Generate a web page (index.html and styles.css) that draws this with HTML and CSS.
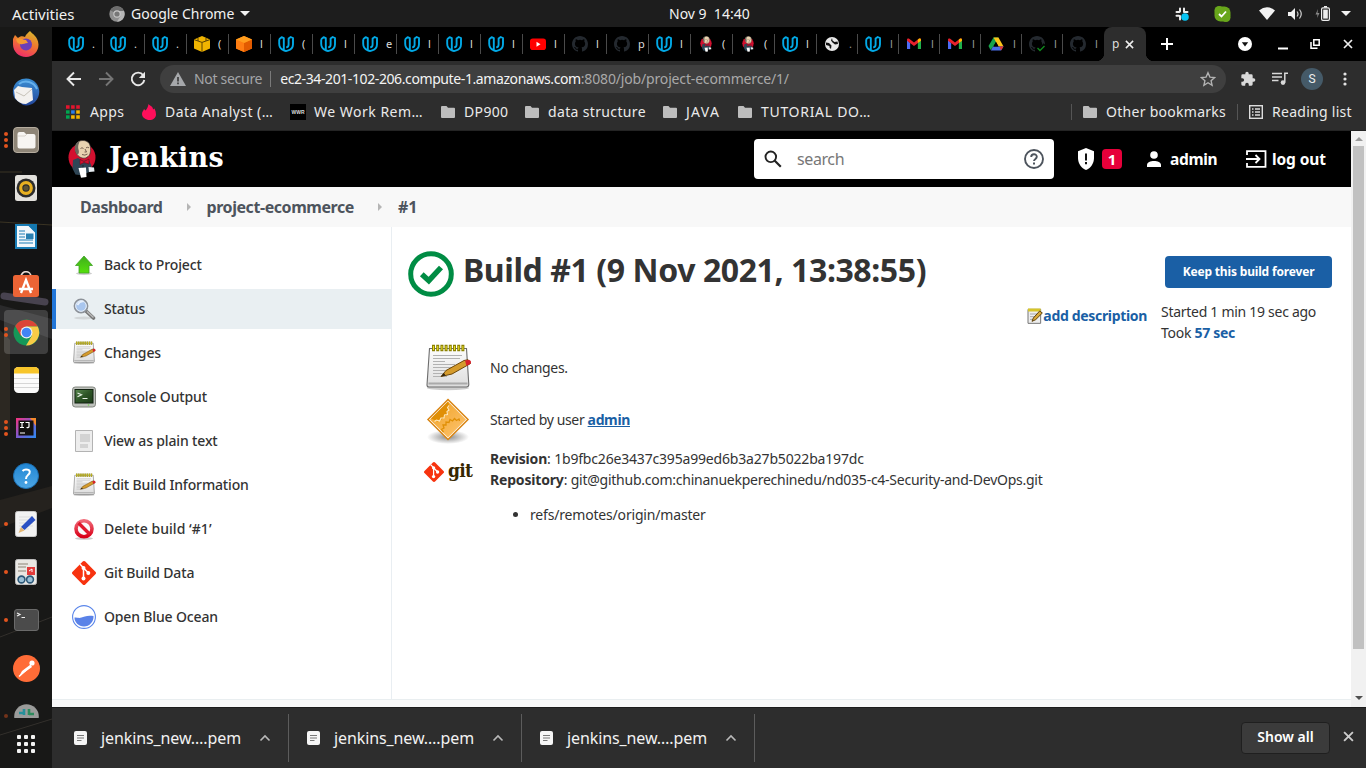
FILE: index.html
```html
<!DOCTYPE html>
<html lang="en">
<head>
<meta charset="utf-8">
<title>project-ecommerce #1 [Jenkins]</title>
<link rel="stylesheet" href="styles.css">
</head>
<body>
<svg class="defs" width="0" height="0">
  <defs>
    <linearGradient id="gPaper" x1="0" y1="0" x2="0" y2="1"><stop offset="0" stop-color="#fdfdfd"/><stop offset="1" stop-color="#dcdcdc"/></linearGradient>
    <linearGradient id="gFox" x1="0.7" y1="0" x2="0.3" y2="1"><stop offset="0" stop-color="#d9b52e"/><stop offset=".45" stop-color="#f07a2e"/><stop offset="1" stop-color="#ee2a6c"/></linearGradient>
    <linearGradient id="gBird" x1="0" y1="0" x2="0" y2="1"><stop offset="0" stop-color="#3b8fd4"/><stop offset="1" stop-color="#23479b"/></linearGradient>
    <linearGradient id="gHelp" x1="0" y1="0" x2="0" y2="1"><stop offset="0" stop-color="#2186d4"/><stop offset="1" stop-color="#4da6e4"/></linearGradient>
    <linearGradient id="gIj" x1="0" y1="0" x2="1" y2="1"><stop offset="0" stop-color="#f9317b"/><stop offset=".5" stop-color="#7a5bd0"/><stop offset="1" stop-color="#2b8cf2"/></linearGradient>
    <linearGradient id="gUp" x1="0" y1="0" x2="0" y2="1"><stop offset="0" stop-color="#3fae1c"/><stop offset="1" stop-color="#55e00b"/></linearGradient>
    <linearGradient id="gNo" x1="0" y1="0" x2="0" y2="1"><stop offset="0" stop-color="#f06a78"/><stop offset="1" stop-color="#d90018"/></linearGradient>
    <linearGradient id="gOr" x1="0" y1="0" x2="1" y2="1"><stop offset="0" stop-color="#f0a020"/><stop offset="1" stop-color="#fdc573"/></linearGradient>
    <linearGradient id="gScr" x1="0" y1="0" x2="1" y2="1"><stop offset="0" stop-color="#5b8a51"/><stop offset=".5" stop-color="#2d5426"/><stop offset="1" stop-color="#1c3a18"/></linearGradient>
    <radialGradient id="gShade"><stop offset="0" stop-color="#8a8a8a"/><stop offset="1" stop-color="#8a8a8a" stop-opacity="0"/></radialGradient>
    <symbol id="udacity" viewBox="0 0 16 16"><path d="M1.200 3.200v4.600c0 3.400 1.900 5.600 4.600 6.600V2.200L3.600 1.200 1.200 3.200M5.800 14.400c1.200.6 2.600.7 3.700.3 3.300-.9 5.500-3.400 5.500-6.500V2l-2.300-1-2.100 1.500v5.900c0 1.700-1 2.800-2.400 3" fill="none" stroke="#02a9e6" stroke-width="1.900" stroke-linejoin="round"/></symbol>
    <symbol id="github" viewBox="0 0 16 16"><path fill="#24292f" d="M8 0C3.580 0 0 3.580 0 8c0 3.540 2.290 6.530 5.470 7.590.4.070.55-.17.55-.38v-1.490c-2.010.37-2.530-.49-2.690-.94-.09-.23-.48-.94-.82-1.130-.28-.15-.68-.52-.01-.53.63-.01 1.080.58 1.230.82.72 1.210 1.870.87 2.330.66.070-.52.28-.87.51-1.070-1.780-.2-3.640-.89-3.640-3.950 0-.87.31-1.590.82-2.150-.08-.2-.36-1.020.08-2.120 0 0 .67-.21 2.200.82a7.600 7.600 0 0 1 4 0c1.530-1.040 2.200-.82 2.200-.82.44 1.100.16 1.920.08 2.120.51.56.82 1.270.82 2.150 0 3.070-1.870 3.750-3.650 3.950.29.25.54.73.54 1.480v2.200c0 .21.15.46.55.38A8 8 0 0 0 16 8c0-4.420-3.580-8-8-8z"/></symbol>
    <symbol id="cube" viewBox="0 0 16 16"><path d="M8 0l8 3.500v9L8 16 0 12.500v-9z"/></symbol>
    <symbol id="jenk" viewBox="0 0 28 38"><ellipse cx="14" cy="17.500" rx="13.500" ry="14" fill="#d3102f"/><path d="M5 20l5-2 5 3 6-1 2.500 6-1 5.500-5 2-2 2-8-1-3-6z" fill="#2f4656"/><path d="M7.500 8c0-6 4-7.500 7.500-7.500s7.500 2 7.500 8c.3 5-1 8-5 9.500-4 1-9-2-10-7z" fill="#e9d3b0" stroke="#3c3430" stroke-width=".7"/><path d="M7 10.500C6 6 8 2.500 11.500 1c0 2-2 4-1 8.500 1 3 0 5-1.500 5z" fill="#6d665d"/><path d="M12.500 8.500q1.500-1.500 3 0M18 7.800q1.500-1 3 0M14 14.500q3 1.500 5.500-.5M17 9l1.500 3h-2" stroke="#5a4438" fill="none" stroke-width=".8"/><path d="M12 19.500l4 2 5-2.500v5l-5-1.500-4 2z" fill="#d3102f" stroke="#6f0a1c" stroke-width=".6"/><path d="M15 25v5" stroke="#16242c"/><path d="M10.500 28l7.500-.5.500 9.500-5.500.7z" fill="#fff"/><path d="M20.500 27l5.500.5.500 4-5.500.5z" fill="#e9eef2"/></symbol>
    <symbol id="gmail" viewBox="0 0 16 12"><path d="M0 1.500V12h3.600V5z" fill="#4c6bf5"/><path d="M16 1.500V12h-3.600V5z" fill="#1fb04b"/><path d="M0 1.500C0 0 1.500-.4 2.500.4L8 4.600 13.500.4C14.500-.4 16 0 16 1.500v1L8 8.600 0 2.500z" fill="#e8202c"/><path d="M12.400 1.300l1.100-.9C14.500-.4 16 0 16 1.500v1l-3.600 2.700z" fill="#fbbc04"/></symbol>
    <symbol id="folder" viewBox="0 0 14 12"><path d="M1 0h4.500L7 1.800h6a1 1 0 0 1 1 1V11a1 1 0 0 1-1 1H1a1 1 0 0 1-1-1V1a1 1 0 0 1 1-1z" fill="#bdbdbd"/></symbol>
    <symbol id="notepad" viewBox="0 0 48 48"><ellipse cx="24" cy="44" rx="21" ry="2.200" fill="#ccc"/><path d="M5.500 4.500h37L44.800 40.500q0 2.500-2.500 2.500H5Q3 43 3 41z" fill="url(#gPaper)" stroke="#6d6d6d" stroke-width="1.100"/><path d="M4.500 39.500h39" stroke="#aaa" stroke-width="2"/><path d="M9 11.500h29M9 14.500h27M9 17.500h12M9 20.500h22M9 23.500h19M9 26.500h17M9 29.500h10M9 32.500h14" stroke="#b2b2b2" stroke-width="1"/><path d="M8 4h33" stroke="#8d8200" stroke-width="6.500" stroke-dasharray="3 1.200"/><path d="M9 4h31" stroke="#e9df2a" stroke-width="4" stroke-dasharray="1 3.200"/><path d="M17 32.500l5-6L40 16.500l4-.8 2.500 3.800L28 30z" fill="#d59b2c" stroke="#6d4708" stroke-width="1"/><path d="M41 16.500l4-.8q3 1 1.500 4L42.500 22z" fill="#d8202c"/><path d="M17 32.500l3-3.500 1.500 2.500z" fill="#2d2413"/></symbol>
    <symbol id="gitmark" viewBox="0 0 24 24"><path d="M10.700.6L.6 10.700a1.900 1.900 0 0 0 0 2.600l10.100 10.100a1.900 1.900 0 0 0 2.600 0l10.100-10.100a1.900 1.900 0 0 0 0-2.600L13.300.6a1.900 1.900 0 0 0-2.600 0z" fill="#f7330f"/><path d="M8 3.300l3.500 3.500v11M12 7.500l4.500 4.500" stroke="#fff" stroke-width="1.500" fill="none"/><circle cx="11.500" cy="7" r="2" fill="#fff"/><circle cx="16.300" cy="12" r="2" fill="#fff"/><circle cx="11.500" cy="17.500" r="2" fill="#fff"/></symbol>
    <symbol id="doc" viewBox="0 0 13 14"><rect width="13" height="14" rx="2" fill="#f5f5f5"/><path d="M3 4.500h7M3 7h7M3 9.500h4.500" stroke="#777" stroke-width="1"/></symbol>
    <symbol id="chev" viewBox="0 0 12 8"><path d="M1.500 6.500L6 2l4.500 4.500" fill="none" stroke="#b9b9b9" stroke-width="1.600"/></symbol>
    <symbol id="x" viewBox="0 0 10 10"><path d="M1 1l8 8M9 1L1 9" stroke="currentColor" stroke-width="1.700" fill="none"/></symbol>
  </defs>
</svg>

<div class="desktop">
<header class="topbar">
  <span class="t activities">Activities</span>
  <div class="appmenu">
    <svg width="16" height="16" viewBox="0 0 16 16"><circle cx="8" cy="8" r="7.700" fill="#8f8f8f"/><path d="M8 8L1.300 4.200A7.700 7.700 0 0 1 15 5H8z" fill="#6d6d6d"/><path d="M8 8l3.500 2L8 15.700A7.700 7.700 0 0 0 15 5H9z" fill="#b5b5b5"/><circle cx="8" cy="8" r="3.700" fill="#c9c9c9"/><circle cx="8" cy="8" r="2.600" fill="#777"/></svg>
    <span class="t">Google Chrome</span><i class="caret"></i>
  </div>
  <span class="t clock">Nov 9&nbsp; 14:40</span>
  <div class="tray">
    <svg width="14" height="14" viewBox="0 0 14 14"><g stroke="#ececec" stroke-width="2" stroke-linecap="round"><path d="M5 1.500v3M1.500 5h2.800M9 1.500V5M9.500 5h3M1.500 8.800h2.300M5 9v3.500"/></g><circle cx="10" cy="10" r="3.800" fill="#08c5f5"/></svg>
    <svg class="skype" width="17" height="16" viewBox="0 0 17 16"><rect x=".5" y=".5" width="16" height="15" rx="6" fill="#68a61b"/><circle cx="5" cy="4.500" r="4.500" fill="#68a61b"/><circle cx="12" cy="11.500" r="4.500" fill="#68a61b"/><path d="M5 8l2.500 2.500L12 5.500" fill="none" stroke="#fff" stroke-width="1.800"/></svg>
    <svg class="wifi" width="16" height="13" viewBox="0 0 16 13"><path d="M0 3.500Q8-3 16 3.500L8 13z" fill="#f2f2f2"/></svg>
    <svg class="vol" width="15" height="12" viewBox="0 0 15 12"><path d="M0 4h3l4-4v12L3 8H0z" fill="#f2f2f2"/><path d="M9 3.500q2 2.500 0 5M11.500 1.500q3.500 4.500 0 9" fill="none" stroke="#d0d0d0" stroke-width="1.200"/></svg>
    <svg class="bat" width="15" height="15" viewBox="0 0 15 15"><path d="M3 3L.5 8.500h2L2 12l2.500-5h-2z" fill="#8a8a8a"/><path d="M9 .8h3" stroke="#eee" stroke-width="1.600"/><rect x="6.600" y="1.900" width="7.800" height="12.400" rx="1.300" fill="none" stroke="#eee" stroke-width="1.200"/><rect x="8.200" y="3.600" width="4.600" height="9" fill="#eee"/></svg>
    <i class="caret"></i>
  </div>
</header>

<div class="below">
<nav class="dock">
  <svg class="wall" width="52" height="741" viewBox="0 27 52 741" preserveAspectRatio="none"><rect y="27" width="52" height="741" fill="#181817"/><path d="M0 100h52v190H0z" fill="#131314"/><path d="M0 330l10 10v90H0z" fill="#2c2822"/><path d="M0 172h22M0 222l52 3" stroke="#3a3424" stroke-width="1.200"/><path d="M0 305l52 14v20L0 320z" fill="#2a2a2b"/><path d="M4 296l41 6" stroke="#48434f" stroke-width="7" stroke-linecap="round"/><path d="M0 500l52-14v22L0 528z" fill="#25221e"/><path d="M0 637l52-20M0 735l52-16" stroke="#33302c"/></svg>
  <ul class="apps">
    <li><svg width="28" height="28" viewBox="0 0 28 28"><path d="M1 9l2-4 3 3c2-2 5-2 7-1 1-3 3-4 5-6 2 3 8 5 8.500 13.500C26.500 22 21 27 14 27S1 21.500 1 14.500z" fill="url(#gFox)"/><circle cx="14" cy="14.500" r="6" fill="#6b3fb8"/><path d="M4 9c4-2 6 1 10 1l2 3c-4 0-5 2-8 1S5 12 4 9z" fill="#f59a32"/></svg></li>
    <li><svg width="28" height="28" viewBox="0 0 28 28"><path d="M6 3c6-4 14-3 18 2 5 6 4 14-1 19-3 3-8 4-12 3L3 21C-1 14 1 7 6 3z" fill="url(#gBird)"/><path d="M2 12l4-4 4 1 10 1 1 12-7 4q-7 0-11-6z" fill="#f3f1ee"/><path d="M4 14l8 4 8-7" fill="none" stroke="#c6c1b8"/><path d="M7 6c6-5 15-2 18 5" stroke="#66b1ec" fill="none" stroke-width="2"/></svg></li>
    <li class="dots3"><svg width="26" height="26" viewBox="0 0 26 26"><rect x=".5" y=".5" width="25" height="25" rx="3.500" fill="#8e8577" stroke="#b5ac9f"/><path d="M4.500 7q0-2 2-2H11l2 2h7.500q2 0 2 2v10.500q0 2-2 2h-14q-2 0-2-2z" fill="#f7f5f2"/><path d="M5 9h7l2-2" stroke="#d8d3cc" fill="none"/></svg></li>
    <li><svg width="22" height="26" viewBox="0 0 22 26"><rect width="22" height="26" rx="2.500" fill="#e3e1dd"/><circle cx="11" cy="13" r="9.500" fill="#2c2c2c"/><circle cx="11" cy="13" r="5.300" fill="none" stroke="#e8b021" stroke-width="3.200"/><circle cx="11" cy="13" r="2.600" fill="#5c5336"/></svg></li>
    <li><svg width="22" height="25" viewBox="0 0 22 25"><path d="M1 1h13l7 7v16H1z" fill="#f2f7fb" stroke="#1a7db6" stroke-width="2"/><path d="M12 0h10v10z" fill="#1477ae"/><path d="M4 7h6M4 10h6M4 13h6M4 16h14M4 19h14" stroke="#1a7db6" stroke-width="1.200"/><rect x="11" y="9.500" width="7.500" height="5.500" fill="#297fb0"/></svg></li>
    <li><svg width="26" height="26" viewBox="0 0 26 26"><path d="M8 6c0-7 10-7 10 0" fill="none" stroke="#e9ddd5" stroke-width="1.700"/><rect y="4" width="26" height="22" rx="2.500" fill="#ec6435"/><path d="M8 22l5-13 5 13M6 18h14" fill="none" stroke="#fff" stroke-width="2.300"/></svg></li>
    <li class="dots2 active"><svg width="27" height="27" viewBox="0 0 27 27"><circle cx="13.500" cy="13.500" r="13" fill="#159858"/><path d="M2.200 7l5.700 10L13.500 7.500h11.300A13 13 0 0 0 2.200 7z" fill="#db4437"/><path d="M13.500 7.500h11.300A13 13 0 0 1 13 26.500l6-10z" fill="#f8cb46"/><circle cx="13.500" cy="13.500" r="6" fill="#f1f1f1"/><circle cx="13.500" cy="13.500" r="4.800" fill="#4285f4"/></svg></li>
    <li><svg width="25" height="26" viewBox="0 0 25 26"><rect width="25" height="26" rx="4.500" fill="#fbfbfb"/><path d="M0 6.500V4.500Q0 0 4.500 0h16Q25 0 25 4.500v2z" fill="#f7c52b"/><path d="M0 11.500h25M0 16.500h25M0 20.500h25" stroke="#d6d6d6"/></svg></li>
    <li class="dots3"><svg width="20" height="20" viewBox="0 0 20 20"><rect width="20" height="20" fill="url(#gIj)"/><path d="M14 0h6v8z" fill="#f58a2c"/><rect x="2.500" y="2.500" width="15" height="15" fill="#14110f"/><path d="M4 4.500h4M6 4.500v5M4 9.500h4M9.500 4.500h3.500v4q0 1.300-2.500 1M4 15h5" stroke="#fff" stroke-width="1.200" fill="none"/></svg></li>
    <li><svg width="26" height="26" viewBox="0 0 26 26"><circle cx="13" cy="13" r="12.500" fill="url(#gHelp)" stroke="#1c70b3"/><path d="M9.500 8q1.500-1.500 3.500-1.500c5 0 4.500 4 1.800 5.700Q13 13.500 13 16" stroke="#fff" stroke-width="2" fill="none"/><circle cx="13" cy="19.500" r="1.400" fill="#fff"/></svg></li>
    <li class="dots1"><svg width="22" height="26" viewBox="0 0 22 26"><rect x=".5" y=".5" width="21" height="25" rx="2" fill="#f2f2f2" stroke="#c9c9c9"/><path d="M4 6h14M4 9h14M4 12h14M4 15h14M4 18h10" stroke="#ddd"/><path d="M6 16L17 5l3.500 4-11 10z" fill="#2a50c4"/><path d="M6 16l3.500 3.500L3.500 22z" fill="#e4b672"/></svg></li>
    <li class="dots1"><svg width="22" height="26" viewBox="0 0 22 26"><rect x=".5" y=".5" width="21" height="25" rx="2" fill="#e9e7e3" stroke="#bbb"/><path d="M3 5h10M3 8h8M3 12h8" stroke="#aaa59a" stroke-width="1.300"/><rect x="12" y="8" width="8" height="8" fill="#e23b3b"/><path d="M14 12l3-2v3" stroke="#fff" fill="none"/><circle cx="6.500" cy="20.500" r="3.400" fill="#9bc0d6" stroke="#2d5878" stroke-width="1.600"/><circle cx="15" cy="20.500" r="3.400" fill="#9bc0d6" stroke="#2d5878" stroke-width="1.600"/></svg></li>
    <li class="dots1"><svg width="25" height="22" viewBox="0 0 25 22"><rect x=".5" y=".5" width="24" height="21" rx="2.500" fill="#4b4b4b" stroke="#6a6a6a"/><path d="M3 4l3 1.500L3 7M7.500 8.500H11" stroke="#eee" fill="none" stroke-width="1.200"/></svg></li>
    <li><svg width="27" height="27" viewBox="0 0 27 27"><circle cx="13.500" cy="13.500" r="13.500" fill="#ff6c37"/><circle cx="19" cy="8" r="2.600" fill="#fff"/><path d="M17.500 9.500L9 16l-3 5.500 6-4.500 7-5z" fill="#fff"/><path d="M6 21.500l10-9" stroke="#fff" stroke-width="1.500"/></svg></li>
    <li class="dots1"><svg width="25" height="25" viewBox="0 0 25 25"><circle cx="12.500" cy="12.500" r="12.300" fill="#9a9b9a"/><path d="M10 5v6M5 9h4" stroke="#25909a" stroke-width="2.600"/><path d="M15 5v6M15 10h5" stroke="#2c8a5c" stroke-width="2.600"/></svg></li>
  </ul>
  <div class="grid"><i></i><i></i><i></i><i></i><i></i><i></i><i></i><i></i><i></i></div>
</nav>

<div class="browser">
  <div class="tabs">
    <div class="tab"><svg><use href="#udacity"/></svg><b>.</b></div>
    <div class="tab"><svg><use href="#udacity"/></svg><b>.</b></div>
    <div class="tab"><svg><use href="#udacity"/></svg><b>.</b></div>
    <div class="tab"><svg><use href="#cube" fill="#f0b400"/><path d="M0 3.600l8 2.800 8-2.800M8 6.500V16M4 2v3M12 2v3" stroke="#5c4300" fill="none"/></svg><b>(</b></div>
    <div class="tab"><svg><use href="#cube" fill="#f57c00"/><path d="M8 7l8-3.500v9L8 16z" fill="#e25b00"/><path d="M0 3.500L8 7v9l-8-3.500z" fill="#ff7d12"/><path d="M8 0l8 3.500L8 7 0 3.500z" fill="#ff9d1e"/></svg><b>l</b></div>
    <div class="tab"><svg><use href="#udacity"/></svg><b>(</b></div>
    <div class="tab"><svg><use href="#udacity"/></svg><b>l</b></div>
    <div class="tab"><svg><use href="#udacity"/></svg><b>e</b></div>
    <div class="tab"><svg><use href="#udacity"/></svg><b>l</b></div>
    <div class="tab"><svg><use href="#udacity"/></svg><b>l</b></div>
    <div class="tab"><svg><use href="#udacity"/></svg><b>l</b></div>
    <div class="tab"><svg><rect y="2.500" width="16" height="11.500" rx="2.800" fill="#f00"/><path d="M6.500 5.800v5l4-2.500z" fill="#fff"/></svg><b>l</b></div>
    <div class="tab"><svg><use href="#github"/></svg><b>l</b></div>
    <div class="tab"><svg><use href="#github"/></svg><b>p</b></div>
    <div class="tab"><svg><use href="#udacity"/></svg><b>l</b></div>
    <div class="tab"><svg><use href="#jenk"/></svg><b>(</b></div>
    <div class="tab"><svg><use href="#jenk"/></svg><b>(</b></div>
    <div class="tab"><svg><use href="#udacity"/></svg><b>l</b></div>
    <div class="tab slim"><svg><circle cx="8" cy="8" r="7" fill="#e8e8e8"/><path d="M2 6.500l3 .5 2.500 2.500L7 13l-1.500-1.500V10L2 9zM8 2l.5 2.500 2 1.500 3-.5.5 2.500-3 .5-2.500-2-1.500-2z" fill="#111"/></svg><b>.</b></div>
    <div class="tab slim"><svg><use href="#udacity"/></svg><b>l</b></div>
    <div class="tab slim"><svg><use href="#gmail" x="1" y="2" width="14" height="11.500"/></svg><b>l</b></div>
    <div class="tab slim"><svg><use href="#gmail" x="1" y="2" width="14" height="11.500"/></svg><b>l</b></div>
    <div class="tab slim"><svg><path d="M5.500 1.500h5L5 11l-2.500 3L.5 10z" fill="#18a34c"/><path d="M5.500 1.500h5l5 9h-5z" fill="#fcc419"/><path d="M5 10.500h10.500l-2.500 4H2.800z" fill="#4a6ee8"/><path d="M11.500 10.500h4l-2.500 4z" fill="#e5322d"/><path d="M8 6l2.500 4.500h-5z" fill="#000"/></svg><b>l</b></div>
    <div class="tab slim"><svg><use href="#github"/><path d="M8 11l3 3.500 5-6" stroke="#000" stroke-width="4" fill="none"/><path d="M8.500 12l2.500 2.500 4.500-4.500" stroke="#118a1d" stroke-width="1.400" fill="none"/></svg><b>l</b></div>
    <div class="tab slim nosep"><svg><use href="#github"/></svg><b>l</b></div>
    <div class="tab current"><b>p</b><svg><use href="#x"/></svg></div>
    <svg class="plus" width="12" height="12" viewBox="0 0 12 12"><path d="M6 0v12M0 6h12" stroke="#fff" stroke-width="2"/></svg>
    <div class="winctl">
      <svg width="14" height="14" viewBox="0 0 14 14"><circle cx="7" cy="7" r="7" fill="#fff"/><path d="M3.800 5.200h6.400L7 9.500z" fill="#111"/></svg>
      <svg width="10" height="12" viewBox="0 0 10 12"><path d="M0 10.500h10" stroke="#fff" stroke-width="2"/></svg>
      <svg width="10" height="10" viewBox="0 0 10 10"><path d="M3.800.8h5.400v5.400H3.800z" fill="none" stroke="#fff" stroke-width="1.500"/><path d="M1 3v6.200h6.500" fill="none" stroke="#fff" stroke-width="1.500"/></svg>
      <svg width="10" height="10" color="#eee"><use href="#x"/></svg>
    </div>
  </div>
  <div class="toolbar">
    <svg width="16" height="16" viewBox="0 0 16 16"><path d="M15 8H2M8 1.500L1.500 8 8 14.500" stroke="#e9e9e9" stroke-width="1.900" fill="none"/></svg>
    <svg width="16" height="16" viewBox="0 0 16 16"><path d="M1 8h13M8 1.500L14.500 8 8 14.500" stroke="#757575" stroke-width="1.900" fill="none"/></svg>
    <svg width="16" height="16" viewBox="0 0 16 16"><path d="M13.200 4.200A6.300 6.300 0 1 0 14.300 9" stroke="#e9e9e9" stroke-width="1.900" fill="none"/><path d="M15 .8V7H8.800z" fill="#e9e9e9"/></svg>
    <div class="omni">
      <svg width="16" height="14" viewBox="0 0 16 14"><path d="M8 0l8 14H0z" fill="#a6a8ab"/><path d="M8 5v4.500M8 10.500v1.700" stroke="#3c3c3c" stroke-width="1.700"/></svg>
      <span class="t insecure">Not secure</span><i class="bar"></i><span class="t host">ec2-34-201-102-206.compute-1.amazonaws.com</span><span class="t path">:8080/job/project-ecommerce/1/</span>
      <svg class="star" width="16" height="16" viewBox="0 0 24 24"><path d="M12 2.500l2.900 6.700 7.100.6-5.400 4.700 1.600 7L12 17.700 5.800 21.500l1.600-7L2 9.800l7.100-.6z" fill="none" stroke="#b4b4b4" stroke-width="2"/></svg>
    </div>
    <svg class="puz" width="16" height="16" viewBox="0 0 24 24"><path d="M20.500 11H19V7a2 2 0 0 0-2-2h-4V3.500a2.500 2.500 0 0 0-5 0V5H4a2 2 0 0 0-2 2v3.800h1.500a2.700 2.700 0 0 1 0 5.400H2V20a2 2 0 0 0 2 2h3.800v-1.500a2.700 2.700 0 0 1 5.400 0V22H17a2 2 0 0 0 2-2v-4h1.500a2.500 2.500 0 0 0 0-5z" fill="#d9d9d9"/></svg>
    <svg class="media" width="16" height="14" viewBox="0 0 16 14"><path d="M0 1.500h10M0 5h10M0 8.500h6.500" stroke="#d9d9d9" stroke-width="1.500"/><path d="M12.800 10.500V1.300H16" stroke="#d9d9d9" stroke-width="1.500" fill="none"/><circle cx="11" cy="10.600" r="2.300" fill="#d9d9d9"/></svg>
    <span class="avatar">S</span>
    <svg class="kebab" width="4" height="14" viewBox="0 0 4 14"><g fill="#e3e3e3"><circle cx="2" cy="2" r="1.600"/><circle cx="2" cy="7" r="1.600"/><circle cx="2" cy="12" r="1.600"/></g></svg>
  </div>
  <div class="bookmarks">
    <a class="b1"><svg width="14" height="14" viewBox="0 0 14 14"><path d="M0 2h14" stroke="#e3152e" stroke-width="3.400" stroke-dasharray="3.600 1.500"/><path d="M0 7h3.600" stroke="#00a651" stroke-width="3.400"/><path d="M5.100 7h3.600" stroke="#2b7de9" stroke-width="3.400"/><path d="M10.200 7h3.600" stroke="#f7b500" stroke-width="3.400"/><path d="M0 12h3.600" stroke="#00a651" stroke-width="3.400"/><path d="M5.100 12h8.900" stroke="#f7b500" stroke-width="3.400" stroke-dasharray="3.600 1.500"/></svg><span class="t">Apps</span></a>
    <a class="b2"><svg width="14" height="16" viewBox="0 0 14 16"><path d="M6.500 0c1.500 2 4.500 2 4.500 5.500l1.500-1c1 2 1.500 4 1.500 6 0 3.500-3 5.500-6.500 5.500S0 13.500 0 10c0-2 1.500-3.500 2-5l1.500 1.500C5 5 6 3 6.500 0z" fill="#ff0f5b"/></svg><span class="t">Data Analyst (…</span></a>
    <a class="b3"><span class="wwr">WWR</span><span class="t">We Work Rem…</span></a>
    <a class="b4"><svg width="14" height="12"><use href="#folder"/></svg><span class="t">DP900</span></a>
    <a class="b5"><svg width="14" height="12"><use href="#folder"/></svg><span class="t">data structure</span></a>
    <a class="b6"><svg width="14" height="12"><use href="#folder"/></svg><span class="t">JAVA</span></a>
    <a class="b7"><svg width="14" height="12"><use href="#folder"/></svg><span class="t">TUTORIAL DO…</span></a>
    <a class="b8"><svg width="14" height="12"><use href="#folder"/></svg><span class="t">Other bookmarks</span></a>
    <a class="b9"><svg width="14" height="14" viewBox="0 0 14 14"><rect x=".7" y=".7" width="12.600" height="12.600" fill="none" stroke="#ddd" stroke-width="1.400"/><path d="M3 4h1.500M3 7h1.500M3 10h1.500M6 4h5M6 7h5M6 10h5" stroke="#ddd" stroke-width="1.500"/></svg><span class="t">Reading list</span></a>
  </div>

  <div class="viewport">
    <div class="page">
      <div class="jhead">
        <svg class="jlogo" width="28" height="38"><use href="#jenk"/></svg>
        <span class="t jname">Jenkins</span>
        <div class="search">
          <svg width="18" height="18" viewBox="0 0 18 18"><circle cx="6.800" cy="6.800" r="5.300" fill="none" stroke="#222" stroke-width="1.900"/><path d="M10.500 10.500l6.300 6.300" stroke="#222" stroke-width="2.200"/></svg>
          <span class="t">search</span>
          <svg class="q" width="20" height="20" viewBox="0 0 20 20"><circle cx="10" cy="10" r="9" fill="none" stroke="#4d545d" stroke-width="1.900"/><path d="M7.200 8c0-3.800 5.600-3.600 5.600-.2 0 2-2.800 2.200-2.800 4.300" fill="none" stroke="#4d545d" stroke-width="1.900"/><path d="M10 13.600v2" stroke="#4d545d" stroke-width="2"/></svg>
        </div>
        <svg class="shield" width="20" height="22" viewBox="0 0 20 22"><path d="M10 0l8 3.200V10c0 5.500-3.500 10.500-8 12-4.500-1.500-8-6.500-8-12V3.200z" fill="#fff"/><path d="M10 5.500v7M10 14v2.200" stroke="#111" stroke-width="2"/></svg>
        <span class="badge">1</span>
        <svg class="user" width="16" height="16" viewBox="0 0 16 16"><circle cx="8" cy="4" r="3.800" fill="#fff"/><path d="M1 16v-2c0-5.300 14-5.300 14 0v2z" fill="#fff"/></svg>
        <span class="t hl">admin</span>
        <svg class="exit" width="22" height="20" viewBox="0 0 22 20"><path d="M2 6V2.200h18.500v15.600H2V14M1 10h13M10.500 6l4 4-4 4" fill="none" stroke="#fff" stroke-width="1.800"/></svg>
        <span class="t hl out">log out</span>
      </div>
      <div class="crumbs"><span class="t">Dashboard</span><i></i><span class="t">project-ecommerce</span><i></i><span class="t num">#1</span></div>
      <div class="main">
        <div class="side">
          <a><svg width="24" height="24" viewBox="0 0 24 24"><ellipse cx="12" cy="20.500" rx="8" ry="1.500" fill="#ccc"/><path d="M12 3l8.500 9.500H17V20H7v-7.500H3.500z" fill="url(#gUp)" stroke="#3fa126" stroke-width=".8"/></svg><span class="t">Back to Project</span></a>
          <a class="on"><svg width="24" height="24" viewBox="0 0 24 24"><ellipse cx="12" cy="21" rx="10" ry="1.500" fill="#d2d6d8"/><path d="M14.500 14.500l7 6.500" stroke="#777" stroke-width="3.600" stroke-linecap="round"/><path d="M15 14.500l6.500 6" stroke="#bbb" stroke-width="1.400"/><circle cx="9" cy="9" r="6.600" fill="#a9c6ee" stroke="#8d9299" stroke-width="1.600"/><circle cx="9" cy="9" r="5.300" fill="none" stroke="#e9eff6"/><path d="M5.500 8q2-4 6-3.500" stroke="#e7f0fc" stroke-width="1.800" fill="none"/></svg><span class="t">Status</span></a>
          <a><svg width="24" height="24"><use href="#notepad"/></svg><span class="t">Changes</span></a>
          <a><svg width="24" height="24" viewBox="0 0 24 24"><rect x=".5" y="2" width="23" height="20" rx="2.800" fill="#bfc2bd" stroke="#82867f"/><rect x="3" y="4.500" width="18" height="13.500" fill="url(#gScr)" stroke="#112010"/><path d="M5.500 8l4 1.800-4 2M10.500 13.500h5" stroke="#e6efe4" stroke-width="1.200" fill="none"/><circle cx="16.500" cy="20" r=".8" fill="#6fd44b"/></svg><span class="t">Console Output</span></a>
          <a><svg width="24" height="24" viewBox="0 0 24 24"><path d="M3.500 1.500h17v21h-17z" fill="#ededed" stroke="#b3b3b3"/><path d="M8 5h10v8H8zM8 15h8v4H8z" fill="#d3d3d3"/></svg><span class="t">View as plain text</span></a>
          <a><svg width="24" height="24"><use href="#notepad"/></svg><span class="t">Edit Build Information</span></a>
          <a><svg width="24" height="24" viewBox="0 0 24 24"><ellipse cx="12" cy="21.500" rx="9" ry="1.300" fill="#ccc"/><circle cx="12" cy="11.700" r="8" fill="#fafafa" stroke="url(#gNo)" stroke-width="3.600"/><path d="M6.500 6l11 11" stroke="#e0182d" stroke-width="3.400"/></svg><span class="t del">Delete build ‘#1’</span></a>
          <a><svg width="24" height="24"><use href="#gitmark"/></svg><span class="t">Git Build Data</span></a>
          <a><svg width="24" height="24" viewBox="0 0 24 24"><circle cx="12" cy="12" r="11.400" fill="#fff" stroke="#5a86ea" stroke-width="1.100"/><path d="M2.500 12.500c3 0 4.500 1 7 0s6-2.500 12-1.500c.5 5.500-4 10.500-9.500 10.500S2.300 17 2.500 12.500z" fill="#5a82e8"/></svg><span class="t">Open Blue Ocean</span></a>
        </div>
        <div class="content">
          <div class="title">
            <svg width="46" height="46" viewBox="0 0 46 46"><circle cx="23" cy="23" r="20.300" fill="#fff" stroke="#008c44" stroke-width="5"/><path d="M13.800 23.300l7 6.400L33 16.500" fill="none" stroke="#008c44" stroke-width="5.500"/></svg>
            <h1 class="t">Build #1 (9 Nov 2021, 13:38:55)</h1>
            <button class="t keep">Keep this build forever</button>
          </div>
          <div class="meta">
            <a class="add"><svg width="16" height="16" viewBox="0 0 48 48"><path d="M3 4h38v42H3z" fill="#eee" stroke="#777" stroke-width="3"/><path d="M3 6h38" stroke="#d6c52a" stroke-width="9"/><path d="M9 18h22M9 26h16M9 34h10" stroke="#999" stroke-width="2.500"/><path d="M15 40l4-10L38 9l8 6-20 20z" fill="#d9a93a" stroke="#5e410c" stroke-width="3"/></svg><span class="t">add description</span></a>
            <div class="times"><span class="t">Started 1 min 19 sec ago</span><br><span class="t">Took <a>57 sec</a></span></div>
          </div>
          <div class="row r1"><svg width="48" height="48"><use href="#notepad"/></svg><span class="t">No changes.</span></div>
          <div class="row r2"><svg width="48" height="48" viewBox="0 0 48 48"><ellipse cx="24" cy="41" rx="21" ry="7" fill="url(#gShade)"/><path d="M24 3.500L44 23.500 24 43.500 4 23.500z" fill="#fff" stroke="#d98411" stroke-width="1.500"/><path d="M24 5.500l18 18-18 18-18-18z" fill="url(#gOr)"/><path d="M24 5.500l1 3-1.500 3 1 3-2 4-4 4.500-5 2.500-6.500-3z" fill="#e08f06"/><path d="M25 9.500l-1.500 2 1.500 2.500-2 1.500.5 3-3 .5-.5 3-3 0-1.500 3-3-1-2 1.500" fill="none" stroke="#ffe9bd" stroke-width="1.100"/><path d="M19.500 36l-2-2.500 2.500-1.500-1-3 3 0 0-3 3 .5 1-3 2.500 1.500 2-2.500 2 2 2.500-1.500.5 2" fill="none" stroke="#e08f06" stroke-width="1.300"/></svg><span class="t">Started by user <a>admin</a></span></div>
          <div class="row r3"><span class="gitlogo"><svg width="20" height="20"><use href="#gitmark"/></svg><span>git</span></span>
            <div class="rev"><p><b class="t">Revision</b>: <span class="t hash">1b9fbc26e3437c395a99ed6b3a27b5022ba197dc</span></p><p><b class="t">Repository</b>: <span class="t repo">git@github.com:chinanuekperechinedu/nd035-c4-Security-and-DevOps.git</span></p>
            <ul><li><span class="t">refs/remotes/origin/master</span></li></ul></div>
          </div>
        </div>
      </div>
      <div class="foot"></div>
    </div>
    <div class="scroll"><i class="up"></i><div class="thumb"></div><i class="down"></i></div>
  </div>

  <div class="downloads">
    <div class="dl"><svg width="13" height="14"><use href="#doc"/></svg><span class="t">jenkins_new….pem</span><svg width="12" height="8"><use href="#chev"/></svg></div>
    <div class="dl"><svg width="13" height="14"><use href="#doc"/></svg><span class="t">jenkins_new….pem</span><svg width="12" height="8"><use href="#chev"/></svg></div>
    <div class="dl"><svg width="13" height="14"><use href="#doc"/></svg><span class="t">jenkins_new….pem</span><svg width="12" height="8"><use href="#chev"/></svg></div>
    <button class="all"><span class="t">Show all</span></button>
    <svg class="close" width="11" height="11"><use href="#x"/></svg>
  </div>
</div>
</div>
</div>
</body>
</html>
```
FILE: styles.css
```css
* { box-sizing: border-box; }
body { margin: 0; font-family: "Noto Sans", "Open Sans", sans-serif; font-size: 14px; color: #333; }
svg { flex: none; display: block; }
.defs { position: absolute; }
.t { white-space: nowrap; }
.desktop { width: 1366px; height: 768px; overflow: hidden; display: flex; flex-direction: column; }

.topbar { height: 27px; background: #1d1d1d; color: #f2f2f2; display: grid; grid-template-columns: 109px 560px 1fr auto; align-items: center; padding-right: 15px; }
.activities { padding-left: 12px; font-size: 15px; }
.appmenu { display: flex; align-items: center; gap: 6px; }
.caret { border: 5px solid transparent; border-top-color: #f2f2f2; border-bottom: 0; }
.tray { display: flex; align-items: center; }
.skype { margin-left: 25px; }
.wifi { margin-left: 28px; }
.vol { margin-left: 13px; }
.bat { margin-left: 12px; }
.tray .caret { margin-left: 11px; }

.below { display: flex; height: 741px; }
.dock { width: 52px; position: relative; flex: none; overflow: hidden; background: #181817; display: flex; flex-direction: column; }
.wall { position: absolute; left: 0; top: 0; }
.apps { position: relative; list-style: none; margin: -7px 0 0; padding: 0; height: 698px; overflow: hidden; }
.apps li { height: 48px; display: flex; align-items: center; justify-content: center; position: relative; }
.active::after { content: ""; position: absolute; inset: 2px 4px; background: rgba(255,255,255,.17); border-radius: 4px; z-index: -1; }
.active { z-index: 0; }
.dots1::before, .dots2::before, .dots3::before { content: ""; position: absolute; left: 4px; width: 4px; height: 4px; border-radius: 50%; background: #e2541e; }
.dots2::before { top: 19px; box-shadow: 0 6px #e2541e; }
.dots3::before { box-shadow: 0 -6px #e2541e, 0 6px #e2541e; }
.apps li:last-child::before { opacity: .45; }
.grid { position: relative; display: grid; grid-template-columns: repeat(3, 4px); gap: 3px; margin: 17px 0 0 17px; }
.grid i { width: 4px; height: 4px; background: #f2f2f2; border-radius: 1px; }

.browser { width: 1314px; display: flex; flex-direction: column; }
.tabs { height: 34px; background: #000; display: flex; align-items: center; padding-left: 9px; color: #ddd; }
.tab { width: 42px; height: 20px; border-right: 1px solid #4a4a4a; display: flex; align-items: center; padding-left: 7px; }
.tab svg { width: 16px; height: 16px; }
.tab b { font: 11px/20px "Noto Sans", sans-serif; margin-left: 8px; }
.slim { width: 41px; }
.slim b { color: #999; margin-left: 9px; }
.nosep { border-right-color: transparent; }
.current { position: relative; height: 34px; border: 0; background: #2d2d2d; border-radius: 8px 8px 0 0; padding-left: 8px; }
.current::before, .current::after { content: ""; position: absolute; bottom: 0; width: 8px; height: 8px; }
.current::before { left: -8px; background: radial-gradient(circle at 0 0, #000 8px, #2d2d2d 8.5px); }
.current::after { right: -8px; background: radial-gradient(circle at 100% 0, #000 8px, #2d2d2d 8.5px); }
.current b { margin: 0; font-size: 12px; }
.current svg { width: 9px; height: 9px; margin-left: 6px; color: #eee; }
.plus { margin-left: 15px; }
.winctl { margin-left: auto; padding-right: 13px; display: flex; align-items: center; }
.winctl svg:nth-child(2) { margin-left: 26px; }
.winctl svg:nth-child(3) { margin-left: 22px; }
.winctl svg:nth-child(4) { margin-left: 23px; }

.toolbar { height: 35px; background: #2d2d2d; display: flex; align-items: center; padding-left: 14px; gap: 16px; }
.omni { width: 1066px; height: 28px; margin-left: -2px; border-radius: 14px; background: #3f3f3f; display: flex; align-items: center; padding: 0 10px; }
.insecure { color: #a3a5a8; margin-left: 8px; letter-spacing: -.3px; }
.bar { width: 1px; height: 16px; background: #7a7a7a; margin: 0 9px 0 8px; }
.host { color: #f4f4f4; letter-spacing: -.4px; }
.path { color: #a9a9a9; letter-spacing: -.16px; }
.star { margin-left: auto; }
.puz { margin-left: -2px; }
.avatar { margin-left: -3px; width: 22px; height: 22px; border-radius: 50%; background: #455a68; color: #eee; text-align: center; font: 12px/22px Roboto, sans-serif; }
.kebab { margin-left: 4px; }

.bookmarks { height: 35px; background: #2d2d2d; border-bottom: 1px solid #242424; color: #eaeaea; display: flex; align-items: center; padding: 0 0 3px 14px; letter-spacing: .35px; }
.bookmarks a { display: flex; align-items: center; }
.b1 { width: 76px; gap: 10px; }
.b2 { width: 148px; gap: 9px; letter-spacing: .45px; }
.b3 { width: 151px; gap: 8px; letter-spacing: .5px; }
.wwr { width: 16px; height: 16px; background: #000; color: #ddd; font: bold 5px/16px "Liberation Sans", sans-serif; letter-spacing: 0; text-align: center; }
.b4 { width: 84px; gap: 9px; }
.b5 { width: 138px; gap: 9px; }
.b6 { width: 75px; gap: 9px; letter-spacing: 1.300px; }
.b7 { gap: 9px; letter-spacing: .7px; }
.b8 { margin-left: auto; gap: 9px; border-left: 1px solid #555; padding-left: 11px; height: 16px; width: 166px; letter-spacing: .28px; }
.b9 { gap: 9px; border-left: 1px solid #555; padding-left: 11px; height: 16px; width: 129px; letter-spacing: .28px; }

.viewport { height: 576px; display: flex; }
.page { width: 1299px; display: flex; flex-direction: column; background: #fff; }
.jhead { height: 56px; background: #000; color: #fff; display: flex; align-items: center; padding-left: 16px; }
.jname { font: bold 27px "DejaVu Serif", serif; margin: -3px 0 0 13px; width: 117px; letter-spacing: .2px; }
.search { width: 300px; height: 40px; margin-left: 528px; background: #fff; border-radius: 4px; color: #777; display: flex; align-items: center; padding: 0 10px; gap: 15px; font-size: 16px; letter-spacing: -.4px; }
.q { margin-left: auto; }
.shield { margin-left: 22px; }
.badge { margin-left: 6px; width: 20px; height: 20px; border-radius: 4px; background: #e6003a; font-weight: bold; text-align: center; line-height: 20px; font-size: 15px; }
.user { margin-left: 24px; }
.hl { font-weight: bold; font-size: 15.500px; margin-left: 8px; width: 47px; letter-spacing: -.35px; }
.exit { margin-left: 28px; }
.out { margin-left: 5px; letter-spacing: -.1px; }
.crumbs { height: 40px; background: #f8f8f8; display: flex; align-items: center; padding-left: 28px; font-size: 16px; font-weight: bold; color: #4d545d; letter-spacing: -.43px; }
.crumbs .num { letter-spacing: 0; }
.crumbs i { margin: 0 16px 0 24px; border: 4px solid transparent; border-left-color: #b5b5b5; border-right: 0; }
.main { height: 472px; display: flex; }
.side { width: 340px; border-right: 1px solid #e9eef2; padding-top: 18px; display: flex; flex-direction: column; gap: 4px; font-weight: 550; letter-spacing: -.15px; }
.side a { height: 40px; padding-left: 20px; display: flex; align-items: center; gap: 8px; }
.side .t { margin-top: -2px; }
.side .del { letter-spacing: .05px; }
.side .on { background: #e9eff2; border-left: 4px solid #2276d8; padding-left: 16px; }
.content { flex: 1; padding: 24px 19px 0 16px; }
.title { display: flex; height: 46px; }
h1 { margin: -4px 0 0 9px; font-size: 32px; line-height: 46px; letter-spacing: -.41px; }
.keep { margin: 5px 0 0 auto; width: 167px; height: 32px; background: #1a5fa5; color: #fff; border: 0; border-radius: 4px; font: bold 12px "Noto Sans", sans-serif; letter-spacing: -.17px; padding: 0 0 2px; }
.meta { display: flex; justify-content: flex-end; margin-top: 4px; height: 43px; line-height: 21px; letter-spacing: -.28px; }
.meta a, .row a { color: #1a5fa5; font-weight: bold; }
.row a { text-decoration: underline; }
.add { display: flex; height: 16px; align-items: center; margin-top: 7px; }
.add .t { margin-top: -2px; letter-spacing: -.33px; }
.times { width: 171px; margin-left: 14px; }
.row { display: flex; align-items: center; height: 52px; padding-left: 16px; gap: 18px; line-height: 21px; letter-spacing: -.36px; }
.r1 { margin-top: -2px; }
.r1 .t, .r2 .t { margin-top: -2px; }
.r3 { align-items: flex-start; letter-spacing: -.18px; }
.repo { letter-spacing: -.25px; }
.gitlogo { width: 48px; display: flex; align-items: center; gap: 4px; height: 30px; margin-top: 11px; font: bold 19px "DejaVu Serif Condensed", "DejaVu Serif", serif; letter-spacing: -.7px; color: #362701; }
.gitlogo > span { margin-top: -4px; }
.rev { padding-top: 2px; }
.rev p { margin: 0; }
.rev ul { margin: 14px 0 0; padding-left: 40px; }
.foot { height: 8px; background: #f8f8f8; border-top: 1px solid #e9eef0; }
.scroll { width: 15px; background: #f1f1f1; display: flex; flex-direction: column; align-items: center; }
.up { border: 4px solid transparent; border-bottom-color: #9a9a9a; border-top: 0; margin: 6px 0 5px; }
.thumb { width: 11px; height: 503px; background: #c1c1c1; }
.down { border: 4px solid transparent; border-top-color: #505050; border-bottom: 0; margin-top: 47px; }

.downloads { flex: 1; background: #2d2d2d; border-top: 1px solid #1c1c1c; display: flex; align-items: center; color: #f2f2f2; font-size: 16px; letter-spacing: -.1px; }
.dl { width: 233px; height: 48px; border-right: 1px solid #5c5c5c; display: flex; align-items: center; padding: 0 17px 0 18px; }
.dl:first-child { width: 237px; padding-left: 22px; }
.dl .t { margin-left: 14px; width: 158px; }
.all { margin-left: auto; width: 89px; height: 32px; background: #3b3b3b; border: 1px solid #1f1f1f; border-radius: 4px; color: #fff; font: 600 14px "Noto Sans", sans-serif; padding: 0 0 3px; }
.close { margin: 0 12px 3px 13px; color: #ccc; }
```
